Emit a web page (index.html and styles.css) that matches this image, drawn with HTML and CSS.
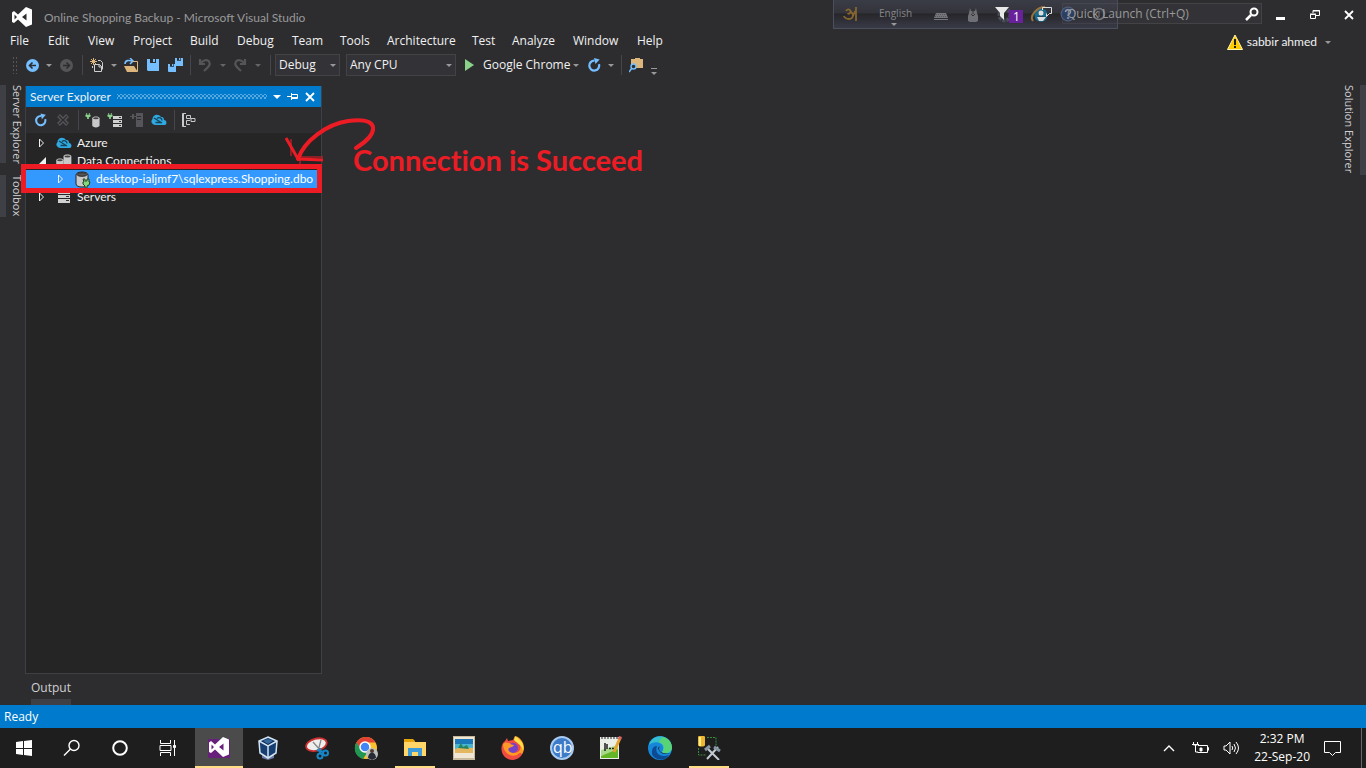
FILE: index.html
```
<!DOCTYPE html>
<html lang="en">
<head>
<meta charset="utf-8">
<meta name="viewport" content="width=device-width, initial-scale=1">
<title>Online Shopping Backup - Microsoft Visual Studio</title>
<link rel="stylesheet" href="styles.css">
</head>
<body>
<svg class="defs" aria-hidden="true">
  <symbol id="vs" viewBox="0 0 22 22"><path fill-rule="evenodd" d="M15 1l6 2.400v15.200L15 21l-8-7.500L3 17l-2-1V6.500L3 5l4 3.500zM15.500 7.500L11 11l4.500 3.500zM3.500 8.500v5L6 11z"/></symbol>
  <symbol id="refresh" viewBox="0 0 16 16"><path d="M12.800 6.500A5.300 5.300 0 1 1 8 2.800" fill="none" stroke="currentColor" stroke-width="2.400"/><path d="M7.500 0l6 1.500-4.500 5z" fill="currentColor"/></symbol>
  <symbol id="cloud" viewBox="0 0 16 14"><path fill="#2fa9e0" d="M4 12a3.500 3.500 0 0 1-2.500-6C1.500 2 7 0 10 4c3 0 3 2 3 3 3 0 3.500 5 0 5z"/><path d="M3 5l8 5M6 5.500c2-2 5-.5 5 2M4.500 9.500h6" fill="none" stroke="#17445c" stroke-width="1.300"/></symbol>
  <symbol id="plug" viewBox="0 0 6 7"><path fill="#8ad18a" d="M1 0h1v2h2V0h1v2h1v2L4 5v2H2V5L0 4V2h1z"/></symbol>
  <symbol id="db" viewBox="0 0 16 16"><path fill="#c8c8c8" d="M4 4c0-3 9-3 9 0v9c0 3-9 3-9 0z"/><ellipse cx="8.500" cy="4" rx="3.500" ry="1.200" fill="#444"/></symbol>
  <symbol id="server" viewBox="0 0 12 12"><path fill="#d0d0d0" d="M0 0h12v3H0zM0 4h12v3H0zM0 8h12v4H0z"/><path fill="#333" d="M8 1h3v1H8zM8 5h3v1H8zM8 9h3v1H8z"/></symbol>
  <symbol id="floppy" viewBox="0 0 12 12"><path fill="#75beff" d="M0 0h3v4h6V0h3v12H1l-1-1z"/><path fill="#75beff" d="M6 0h2v3H6z"/></symbol>
  <symbol id="undo" viewBox="0 0 14 14"><path d="M2 1v5h5M2.500 5.500C5 2 9 1 11 3.500c2 3 0 5-5 9.500" fill="none" stroke="#555558" stroke-width="2.200"/></symbol>
</svg>

<header class="top">
  <div class="titlebar">
    <svg class="logo" viewBox="0 0 22 22"><use href="#vs"/></svg>
    <h1 class="title">Online Shopping Backup - Microsoft Visual Studio</h1>
    <button class="plain notify" aria-label="Notifications">
      <svg width="28" height="18" viewBox="0 0 28 18"><path fill="#e8e8e8" d="M0 1h14L9 7v7l-4-4V7z"/><path fill="#68219a" d="M14 4h14v13H14z"/><text x="18" y="15" class="badge-text">1</text></svg>
    </button>
    <button class="plain feedback" aria-label="Send feedback">
      <svg width="24" height="18" viewBox="0 0 24 18"><path fill="none" stroke="#ddd" d="M12.500 4V1.500h9v6h-2l-3 3v-3"/><circle cx="11" cy="7" r="2.500" fill="#ddd"/><path fill="#ddd" d="M7 11h9l-3 4H9z"/></svg>
    </button>
    <label class="quick"><input type="text" placeholder="Quick Launch (Ctrl+Q)" aria-label="Quick Launch">
      <svg width="14" height="14" viewBox="0 0 14 14"><circle cx="9" cy="5" r="3.500" fill="none" stroke="#fff" stroke-width="2"/><path d="M6 8l-5 5" stroke="#fff" stroke-width="2.500"/></svg>
    </label>
    <div class="winbtns">
      <button class="plain" aria-label="Minimize"><svg width="12" height="12"><path fill="#fff" d="M1 8h9v3H1z"/></svg></button>
      <button class="plain" aria-label="Restore"><svg width="12" height="12" fill="none" stroke="#fff"><path d="M4 4V1.500h6.500v5H7M1.500 5.500h5v4h-5zM1 5h6M4 2h7"/></svg></button>
      <button class="plain" aria-label="Close"><svg width="12" height="12"><path d="M2 2l8 8M10 2l-8 8" stroke="#fff" stroke-width="1.800"/></svg></button>
    </div>
    <div class="ime">
      <svg width="18" height="18" viewBox="0 0 18 18" fill="none" stroke="#86652f" stroke-width="1.800"><path d="M4 6c2-3 6-1 4 2-1 1-2 1-2 0M8 7c4 0 4 7-1 7-3 0-5-2-5-3M10 12c2-1 2-6 4-6M14 2v14"/></svg>
      <span class="lang">English<i class="caret"></i></span>
      <svg width="16" height="18" viewBox="0 0 16 18"><path fill="#75767b" d="M3 8h10l2 5H1zM1 14h14v1H1z"/><path stroke="#55565b" stroke-dasharray="1 1" d="M3 9.500h10M2 11.500h12"/></svg>
      <svg width="12" height="18" viewBox="0 0 12 18"><path fill="#6f7075" d="M3 3l1 3h4l1-3 1 5 1 3v5l-2 1H3l-2-1v-5l1-3z"/><path stroke="#333" fill="none" d="M6 4v5M4 9l2 2 2-2"/></svg>
      <svg width="18" height="18" viewBox="0 0 18 18"><circle cx="9" cy="10" r="5.500" fill="none" stroke="#494d57" stroke-width="4" stroke-dasharray="3 1"/></svg>
      <svg width="22" height="18" viewBox="0 0 22 18" fill="none"><path d="M16 12c-3 5-10 4-10-2s9-7 10 0H6" stroke="#176c8d" stroke-width="3"/><path d="M3 16C-1 11 7 2 15 2" stroke="#98723b" stroke-width="2"/></svg>
      <svg width="16" height="16" viewBox="0 0 16 16"><circle cx="8" cy="8" r="7" fill="#2d4778" fill-opacity=".7" stroke="#59657d"/><path d="M5.500 6c0-3 5-3 5 0 0 2-2.500 2-2.500 4M8 11v2" stroke="#9299a8" fill="none" stroke-width="1.500"/></svg>
      <svg width="14" height="14" viewBox="0 0 14 14"><circle cx="7" cy="7" r="5.500" fill="none" stroke="#77797d" stroke-width="1.500"/><path d="M7 4v6" stroke="#77797d"/></svg>
    </div>
  </div>

  <div class="menubar">
    <nav class="menu">
      <button class="plain">File</button><button class="plain">Edit</button><button class="plain">View</button><button class="plain">Project</button><button class="plain">Build</button><button class="plain">Debug</button><button class="plain">Team</button><button class="plain">Tools</button><button class="plain">Architecture</button><button class="plain">Test</button><button class="plain">Analyze</button><button class="plain">Window</button><button class="plain">Help</button>
    </nav>
    <button class="plain account">
      <svg width="16" height="16" viewBox="0 0 16 16"><path fill="#ffcc00" stroke="#fff3b0" d="M8 1l7.500 14.500H.500z"/><path fill="#1e1e1e" d="M7 5h2v6H7zM7 12h2v2H7z"/></svg>
      <span>sabbir ahmed</span><i class="caret"></i>
    </button>
  </div>

  <div class="toolbar">
    <i class="grip"></i>
    <button class="plain" aria-label="Back"><svg width="13" height="13" viewBox="0 0 13 13"><circle cx="6.500" cy="6.500" r="6.500" fill="#75beff"/><path d="M10 6.500H4M6.500 3.500l-3 3 3 3" fill="none" stroke="#2d2d30" stroke-width="1.600"/></svg></button>
    <i class="caret"></i>
    <button class="plain" aria-label="Forward"><svg width="13" height="13" viewBox="0 0 13 13"><circle cx="6.500" cy="6.500" r="6.500" fill="#555558"/><path d="M3 6.500h6M6.500 3.500l3 3-3 3" fill="none" stroke="#2d2d30" stroke-width="1.600"/></svg></button>
    <i class="sep"></i>
    <button class="plain" aria-label="New project"><svg width="14" height="14" viewBox="0 0 14 14"><path d="M3.500 0v7M0 3.500h7M1 1l5 5M6 1L1 6" stroke="#dcb67a"/><path d="M8 2.500h2.500l2 2v7M2.500 8v2M4.500 13.500v-7h5l2 2v5zM9 6v3h3" fill="none" stroke="#d0d0d0"/></svg></button>
    <i class="caret"></i>
    <button class="plain" aria-label="Open"><svg width="15" height="15" viewBox="0 0 15 15"><path d="M1 6c0-4 4-4 7-3M6 0l3 3-3 3" fill="none" stroke="#75beff" stroke-width="1.600"/><path d="M9 3.500h4.500v10" fill="none" stroke="#dcb67a"/><path fill="#dcb67a" d="M0 8h10l4 6H3z"/></svg></button>
    <button class="plain" aria-label="Save"><svg width="12" height="12"><use href="#floppy"/></svg></button>
    <button class="plain" aria-label="Save all"><svg width="15" height="15" viewBox="0 0 15 15"><use href="#floppy" x="7" y="0" width="8" height="8"/><use href="#floppy" x="0" y="6" width="8" height="8"/></svg></button>
    <i class="sep"></i>
    <button class="plain" aria-label="Undo"><svg width="14" height="14"><use href="#undo"/></svg></button>
    <i class="caret dim"></i>
    <button class="plain" aria-label="Redo"><svg class="flip" width="14" height="14"><use href="#undo"/></svg></button>
    <i class="caret dim"></i>
    <i class="sep"></i>
    <span class="combo"><select aria-label="Configuration"><option>Debug</option></select></span>
    <span class="combo gap"><select aria-label="Platform"><option>Any CPU</option></select></span>
    <button class="plain" aria-label="Start"><svg width="9" height="12"><path fill="#8ad18a" d="M0 0l9 6-9 6z"/></svg></button>
    <button class="plain start-text">Google Chrome</button>
    <i class="caret"></i>
    <button class="plain blue" aria-label="Refresh"><svg width="15" height="15"><use href="#refresh"/></svg></button>
    <i class="caret"></i>
    <i class="sep"></i>
    <button class="plain" aria-label="Find in files"><svg width="14" height="15" viewBox="0 0 14 15"><path fill="#dcb67a" d="M2 1h4V0h5v1h3v9H2z"/><circle cx="4.500" cy="8.500" r="2.500" fill="#2d2d30" stroke="#75beff" stroke-width="1.400"/><path d="M3 10l-3 4" stroke="#75beff" stroke-width="1.600"/></svg></button>
    <span class="overflow"><i class="caret"></i></span>
  </div>
</header>

<main class="work">
  <div class="side left"><button class="plain tab">Server Explorer</button><button class="plain tab toolbox">Toolbox</button></div>
  <section class="panel">
    <div class="panel-head">
      <h2>Server Explorer</h2><i class="dots"></i>
      <i class="caret white"></i>
      <button class="plain" aria-label="Pin"><svg width="12" height="9" fill="none" stroke="#fff"><path d="M0 4.500h4M4.500 1v7M4 2.500h6.500v4H4M4 5.500h6"/></svg></button>
      <button class="plain" aria-label="Close panel"><svg width="10" height="10"><path d="M1 1l8 8M9 1L1 9" stroke="#fff" stroke-width="1.800"/></svg></button>
    </div>
    <div class="panel-tools">
      <button class="plain blue" aria-label="Refresh"><svg width="14" height="15"><use href="#refresh"/></svg></button>
      <button class="plain" aria-label="Stop"><svg width="12" height="12"><path d="M1.500 1.500l9 9M10.500 1.500l-9 9" stroke="#55555a" stroke-width="4"/><path d="M2 2l8 8M10 2l-8 8" stroke="#2d2d30" stroke-width="1.300"/></svg></button>
      <i class="sep"></i>
      <button class="plain" aria-label="Connect to database"><svg width="16" height="16" viewBox="0 0 16 16"><use href="#plug" x="0" y="1" width="6" height="6"/><use href="#db" x="4" y="3" width="13" height="13"/></svg></button>
      <button class="plain" aria-label="Connect to server"><svg width="16" height="16" viewBox="0 0 16 16"><use href="#plug" x="0" y="1" width="6" height="6"/><path fill="#d0d0d0" d="M6 4h9v3H6zM6 8h9v3H6zM6 12h9v3H6z"/><path fill="#333" d="M12 5h2v1h-2zM12 9h2v1h-2zM12 13h2v1h-2z"/></svg></button>
      <button class="plain" aria-label="Add SharePoint connection"><svg width="16" height="16"><path fill="#55555a" d="M7 1h7v14H7zM3 2h2v2h2v1H5v2H3V5H1V4h2z"/><path d="M8 4.500h4M8 7.500h4" stroke="#2d2d30"/></svg></button>
      <button class="plain" aria-label="Connect to Azure"><svg width="16" height="14"><use href="#cloud"/></svg></button>
      <i class="sep"></i>
      <button class="plain" aria-label="Group by"><svg width="16" height="16" fill="none" stroke="#c8c8c8"><path d="M5 1.500H1.500v13H5M2.500 1v14M5.500 3.500h4v3h-4zM10 6.500h4v3h-4zM9 12.500H5.500v-4H9"/></svg></button>
    </div>
    <ul class="tree">
      <li><svg class="mark" width="8" height="10"><path class="hollow" d="M1.500 1v8l4-4z"/></svg><svg width="16" height="14"><use href="#cloud"/></svg><span>Azure</span></li>
      <li><svg class="mark" width="8" height="10"><path fill="#f1f1f1" d="M8 1v7H1z"/></svg><svg width="16" height="16" viewBox="0 0 16 16"><use href="#db" x="4" y="0" width="14" height="14"/><use href="#db" x="-3" y="4" width="13" height="13"/></svg><span>Data Connections</span></li>
      <li class="selected"><svg class="mark" width="8" height="10"><path class="hollow" d="M1.500 1v8l4-4z"/></svg><svg width="16" height="17" viewBox="0 0 16 17"><path fill="#c8c8c8" stroke="#252526" d="M1 4c0-4 12-4 12 0v9c0 4-12 4-12 0z"/><ellipse cx="7" cy="3.500" rx="5" ry="1.800" fill="#555" stroke="#252526"/><path fill="#86d77b" stroke="#234620" d="M8 8h2v2h2V8h2v3h1l-1 3-2 1v2h-2v-2l-2-2v-2h1z"/></svg><span>desktop-ialjmf7\sqlexpress.Shopping.dbo</span></li>
      <li><svg class="mark" width="8" height="10"><path class="hollow" d="M1.500 1v8l4-4z"/></svg><svg width="16" height="12"><use href="#server"/></svg><span>Servers</span></li>
    </ul>
  </section>
  <div class="editor"></div>
  <div class="side right"><button class="plain tab">Solution Explorer</button></div>
  <i class="frame"></i>
  <svg class="arrow" width="92" height="52" viewBox="285 115 92 52" fill="none" stroke="#ed1c24"><path stroke-width="4" stroke-linecap="round" d="M356 148c10-6 18-14 17-21-2-8-17-7-25-6-21 3-44 20-50 38"/><path stroke-width="3" d="M286 138l12 21M298 159l25 1"/><path d="M291 139v17M296 157h27M300 159v7"/></svg>
  <p class="note">Connection is Succeed</p>
</main>

<div class="output"><button class="plain">Output</button></div>
<div class="status">Ready</div>

<footer class="taskbar">
  <div class="system">
    <button class="plain" aria-label="Start menu"><svg width="16" height="16"><path fill="#fff" d="M0 2l7-1v7H0zM8 1l8-1v8H8zM0 9h7v6l-7-1zM8 9h8v7l-8-1z"/></svg></button>
    <button class="plain" aria-label="Search"><svg width="18" height="18" fill="none" stroke="#fff" stroke-width="1.400"><circle cx="11" cy="6.500" r="5"/><path d="M7.500 10L1 16.500"/></svg></button>
    <button class="plain" aria-label="Cortana"><svg width="18" height="18"><circle cx="9" cy="9" r="6.800" fill="none" stroke="#fff" stroke-width="2"/></svg></button>
    <button class="plain" aria-label="Task view"><svg width="18" height="18" fill="none" stroke="#fff"><path d="M1.500 1v3.500h10V1M1.500 17v-3.500h10V17M1 6.500h11v5H1zM15.500 1v16"/><path fill="#fff" d="M14.500 6.500h2v2h-2z"/></svg></button>
  </div>
  <div class="apps">
    <button class="plain active" aria-label="Visual Studio"><svg width="22" height="22"><path fill="#68217a" d="M0 3h22v19H0z"/><use href="#vs" fill="#fff"/></svg></button>
    <button class="plain" aria-label="VirtualBox"><svg width="22" height="24" viewBox="0 0 22 24"><path fill="#6878a0" d="M5 18h12v4l-6 2-6-2z"/><path fill="#173e70" stroke="#d4e4f2" stroke-width="1.500" d="M11 1l9 4-1 12-8 5-8-5L2 5z"/><path fill="#0a2450" stroke="#d4e4f2" stroke-width="1.500" d="M2 5l9 5 9-5M11 10v12"/><path fill="#35689c" d="M11 3l5 2-5 3-5-3z"/></svg></button>
    <button class="plain" aria-label="Snipping Tool"><svg width="24" height="24" viewBox="0 0 24 24"><ellipse cx="11.500" cy="8.500" rx="10.500" ry="6" transform="rotate(-15 12 9)" fill="#eee" stroke="#cf3030" stroke-width="1.800"/><path d="M8 6l8 9M16 4l-3 11" stroke="#888" stroke-width="1.300"/><g fill="none" stroke="#1688c9" stroke-width="2"><circle cx="15" cy="20" r="2.500"/><circle cx="20.500" cy="17" r="2.500"/><path d="M12 14l6 2M15 12v6"/></g></svg></button>
    <button class="plain" aria-label="Google Chrome"><svg width="24" height="24" viewBox="0 0 24 24"><circle cx="12" cy="12" r="11" fill="#fbc02d"/><path fill="#e34133" d="M2.500 6.500a11 11 0 0 1 19 0H12L7 15z"/><path fill="#219653" d="M2.500 6.500L8 15l5 2-4 6A11 11 0 0 1 2.500 6.500z"/><circle cx="11" cy="11" r="5" fill="#4285f4" stroke="#fff" stroke-width="1.500"/><circle cx="18" cy="18" r="6" fill="#b9c0bb"/><circle cx="18" cy="15" r="2" fill="#50382f"/><path fill="#282b35" d="M14 22c0-7 8-7 8 0l-4 2z"/></svg></button>
    <button class="plain running" aria-label="File Explorer"><svg width="22" height="20"><path fill="#e5a50a" d="M0 1h9l2 2v3H0z"/><path fill="#ffd667" d="M0 4h22v14H0z"/><path fill="#3d9bdc" d="M4 18v-8h14v8h-4v-4H8v4z"/></svg></button>
    <button class="plain" aria-label="Photos"><svg width="22" height="24"><path fill="#c9b99c" d="M0 0h22v24H0z"/><path fill="#efe6d3" d="M1 1h20v21H1z"/><path fill="#1b78b9" d="M2 3h18v7H2z"/><path fill="#45b5d2" d="M2 8h18v6H2z"/><path fill="#e3b760" d="M2 13l6-2 12 1v5H2z"/><path fill="#28855b" d="M5 12l3-5 2 4 4-2 2 4z"/></svg></button>
    <button class="plain" aria-label="Firefox"><svg width="24" height="24" viewBox="0 0 24 24"><path fill="#f24b41" d="M4 5l2-3 1 3 5-1 2-4 5 6c6 7 3 17-7 18C2 24-2 14 2 7z"/><path fill="#ff9b23" d="M2 8c4-3 6 0 10 0 4 0 5 8-1 8 8 3 11-5 6-11l-2-5c9 4 10 15 5 19 2-4-2-2-4 0-8 3-14-4-14-11z"/><path fill="#ffe14a" d="M13 4l1-4c6 4 10 9 8 15-1-6-5-7-9-11z"/><circle cx="12" cy="12" r="5" fill="#7542c8"/><path fill="#ff9828" d="M3 7c5-1 6 2 10 2-1 3-5 1-6 5z"/></svg></button>
    <button class="plain" aria-label="qBittorrent"><svg width="24" height="24"><circle cx="12" cy="12" r="11" fill="#3d7bc8" stroke="#a9cbf0" stroke-width="2"/><text x="3" y="17" class="qb">qb</text></svg></button>
    <button class="plain" aria-label="Notepad++"><svg width="24" height="24"><path fill="#e9eee6" d="M1 1h19v22H1z"/><path fill="#62b527" d="M2 20l17-10v12H2z"/><path fill="#a8d889" d="M2 14l17-5v4L2 20z"/><path stroke="#888" stroke-dasharray="2 1" stroke-width="2" d="M2 2h18"/><path stroke="#222" stroke-width="1.500" fill="none" d="M6 7v8M8 8v5M10 12.500h2M13 12.500h2"/><path stroke="#e8a32e" stroke-width="3" d="M21 2l-6 14"/><path fill="#d86464" d="M20 0l3 1-1 3-3-1z"/></svg></button>
    <button class="plain" aria-label="Microsoft Edge"><svg width="24" height="24" viewBox="0 0 24 24"><circle cx="12" cy="12" r="12" fill="#1686d9"/><path fill="#35bfce" d="M1 9C4-3 22-3 24 11c0 7-7 8-10 5 5-9-7-13-13-7z"/><path fill="#58d477" d="M14 1c7 1 10 6 10 11-1 5-7 6-10 4 3-3 3-8-3-10z"/><path fill="#0c4a94" d="M9 10c-3 8 4 12 12 9-5 8-18 4-17-3 0-4 2-6 5-6z"/><path fill="#202020" d="M12 10c-3 4 1 9 10 7-6 2-10 1-12-5z"/></svg></button>
    <button class="plain running" aria-label="SQL Server"><svg width="24" height="24"><path fill="#eeb52e" d="M1 1c0-2 7-2 7 0v8c0 2-7 2-7 0z"/><path fill="#ffed98" d="M2 1h2v9H2z"/><path fill="none" stroke="#368c3c" stroke-dasharray="2 1" d="M10 1.500h9v8M1.500 12v7H9"/><path stroke="#c4ccd3" stroke-width="2" d="M10 23L21 11M10 12l12 12"/><path stroke="#8796a3" stroke-width="3" d="M8 14l5-4M17 11l6 4"/></svg></button>
  </div>
  <div class="tray">
    <button class="plain" aria-label="Show hidden icons"><svg width="12" height="8"><path d="M1 7l5-5 5 5" fill="none" stroke="#fff" stroke-width="1.400"/></svg></button>
    <button class="plain" aria-label="Battery"><svg width="17" height="14" fill="none" stroke="#fff"><path d="M6 4.500h9.500v7H5.500M15 6.500h1.500v3M1.500 1v3h4V1M3.500 4v7H6M0 3.500h7"/><path fill="#fff" d="M8 7h2v3H8z"/></svg></button>
    <button class="plain" aria-label="Volume"><svg width="17" height="14" fill="none" stroke="#fff"><path d="M1 5h2l4-4v12L3 9H1zM9 5q1.500 2 0 4M11 3q3 4 0 8M13 1q5 6 0 12"/></svg></button>
    <div class="clock"><time>2:32 PM</time><time>22-Sep-20</time></div>
    <button class="plain" aria-label="Action center"><svg width="17" height="17" fill="none" stroke="#fff"><path d="M.500 1.500h16v11h-5l-3 3-3-3h-5z"/></svg></button>
    <i class="desktop"></i>
  </div>
</footer>
</body>
</html>
```
FILE: styles.css
```
* { box-sizing: border-box; }
body {
  margin: 0;
  min-height: 100vh;
  display: flex;
  flex-direction: column;
  background: #2d2d30;
  color: #f1f1f1;
  font: 12px/16px "Open Sans", "Noto Sans", sans-serif;
  overflow: hidden;
}
.defs { position: absolute; width: 0; height: 0; }
svg { display: block; flex: none; }
.plain {
  display: flex;
  align-items: center;
  justify-content: center;
  padding: 0;
  border: 0;
  background: none;
  color: inherit;
  font: inherit;
  white-space: nowrap;
}
.blue { color: #75beff; }
.caret {
  display: block;
  width: 0;
  border: 3px solid transparent;
  border-top-color: #999;
  border-bottom: 0;
}
.dim { border-top-color: #656568; }
.white { border-width: 4px; border-bottom: 0; border-top-color: #fff; }
.sep { width: 1px; height: 20px; background: #46464a; }
.flip { transform: scaleX(-1); }

/* Title bar */
.titlebar { position: relative; display: flex; align-items: center; height: 30px; padding: 0 11px 0 11px; }
.logo { width: 22px; height: 22px; fill: #fff; margin-top: 4px; }
.title { flex: 1; margin: 6px 0 0 11px; font: 12px/16px Lato, "Open Sans", sans-serif; color: #999; }
.notify, .feedback { position: relative; z-index: 1; }
.notify { margin-right: 7px; }
.feedback { margin-right: 8px; }
.badge-text { font: 12px "Open Sans", sans-serif; fill: #fff; }
.quick { display: flex; align-items: center; width: 200px; height: 21px; margin-bottom: 3px; padding: 0 2px 0 4px; border: 1px solid #434346; background: #333337; }
.quick input { position: relative; z-index: 1; flex: 1; min-width: 0; padding: 0; border: 0; background: none; color: #999; font: inherit; }
.quick input::placeholder { color: #999; opacity: 1; }
.winbtns { display: flex; gap: 22px; margin-left: 13px; }
.ime {
  position: absolute;
  top: 0;
  right: 248px;
  display: flex;
  align-items: center;
  width: 285px;
  height: 29px;
  padding-left: 8px;
  border: 1px solid #4b4e5c;
  border-top: 0;
  background: linear-gradient(rgba(74, 78, 98, .45), rgba(60, 62, 74, .4) 45%, rgba(28, 28, 32, .4) 50%, rgba(70, 74, 98, .45));
  font-size: 10px;
  color: #85868a;
}
.lang { position: relative; width: 36px; margin: 0 18px 2px 19px; }
.lang .caret { position: absolute; left: 12px; top: 18px; }
.ime svg:nth-of-type(2) { margin-right: 18px; }
.ime svg:nth-of-type(3) { margin-right: 17px; }
.ime svg:nth-of-type(4) { margin-right: 16px; }
.ime svg:nth-of-type(5) { margin-right: 8px; }
.ime svg:nth-of-type(6) { margin-right: 16px; }

/* Menu */
.menubar { display: flex; justify-content: space-between; height: 22px; padding: 0 35px 0 10px; }
.menu { display: grid; grid-template-columns: 38px 40px 45px 57px 47px 55px 48px 47px 85px 40px 61px 64px 30px; justify-items: start; align-items: center; }
.account { gap: 4px; padding-top: 2px; font-family: Lato, "Open Sans", sans-serif; }
.account .caret { margin-left: 4px; }

/* Toolbar */
.toolbar {
  display: grid;
  grid-template-columns: 12px 24px 10px 24px 8px 22px 12px 22px 22px 22px 8px 22px 14px 20px 16px 8px 66px 116px 27px 87px 12px 24px 10px 10px 20px 16px;
  align-items: center;
  justify-items: center;
  height: 26px;
  padding-left: 8px;
}
.grip { width: 5px; height: 18px; background: radial-gradient(circle, #56565a 1px, transparent 1px) 0 0 / 3px 4px; }
.combo { position: relative; width: 65px; justify-self: end; }
.gap { width: 110px; }
.combo select { appearance: none; display: block; width: 100%; height: 22px; padding: 0 3px; border: 1px solid #434346; border-radius: 0; background: #333337; color: #f1f1f1; font: inherit; }
.combo::after { content: ""; position: absolute; right: 4px; top: 10px; border: 3px solid transparent; border-top-color: #999; border-bottom: 0; }
.start-text { justify-self: start; }
.overflow { padding-top: 3px; border-top: 1px solid #999; margin-top: 12px; }

/* Work area */
.work { position: relative; flex: 1; display: flex; padding-top: 7px; }
.side { display: flex; flex-direction: column; gap: 12px; width: 25px; color: #d0d0d0; font-size: 11px; }
.tab { writing-mode: vertical-rl; justify-content: flex-start; height: 78px; }
.left .tab { border-left: 6px solid #3f3f46; width: 25px; padding-left: 2px; }
.left .toolbox { height: 42px; }
.right .tab { border-right: 6px solid #3f3f46; width: 25px; height: 90px; padding-right: 4px; }
.editor { flex: 1; }
.panel { display: flex; flex-direction: column; width: 297px; margin-top: 1px; border: 1px solid #3f3f46; border-top: 0; background: #252526; font-family: Lato, "Open Sans", sans-serif; }
.panel-head { display: flex; align-items: center; gap: 6px; height: 21px; padding: 0 6px 0 4px; background: #007acc; }
.panel-head h2 { margin: 0; font-size: 12px; font-weight: 400; }
.dots {
  flex: 1;
  height: 5px;
  background:
    radial-gradient(circle, #59a8de 1px, transparent 1px) 0 0 / 4px 4px,
    radial-gradient(circle, #59a8de 1px, transparent 1px) 2px 2px / 4px 4px;
}
.panel-tools { display: grid; grid-template-columns: 22px 22px 8px 22px 22px 22px 22px 8px 22px; align-items: center; justify-items: center; height: 26px; padding-left: 4px; background: #2d2d30; }
.tree { list-style: none; margin: 0; padding: 1px 0; }
.tree li { display: grid; grid-template-columns: 8px 16px auto; column-gap: 6px; align-items: center; height: 18px; padding-left: 12px; white-space: nowrap; }
.tree li svg { margin-left: 4px; }
.tree li .mark { margin-left: 0; }
.hollow { fill: none; stroke: #f1f1f1; }
.tree li span { margin-left: 3px; }
.tree .selected { padding-left: 31px; background: #3399ff; color: #fff; }

/* Annotation over the window */
.frame { position: absolute; left: 21px; top: 86px; width: 301px; height: 29px; border: 5px solid #ed1c24; }
.arrow { position: absolute; left: 285px; top: 37px; }
.note { position: absolute; left: 353px; top: 65px; margin: 0; font: 700 29px/34px Lato, sans-serif; font-variant-ligatures: none; color: #ed1c24; white-space: nowrap; }

/* Bottom */
.output { display: flex; height: 31px; padding: 6px 31px 0; }
.output .plain { align-items: flex-start; border-bottom: 6px solid #3f3f46; color: #d0d0d0; }
.status { height: 23px; padding: 4px; background: #007acc; color: #fff; }
.taskbar { display: flex; height: 40px; background: #1e1e1e; color: #fff; }
.system, .apps, .tray { display: flex; }
.system .plain, .apps .plain { width: 48px; height: 40px; }
.apps { gap: 1px; margin-left: 3px; }
.apps .plain { position: relative; }
.active { background: #4b4b4b; border-bottom: 2px solid #ffdc86; }
.running::after { content: ""; position: absolute; left: 4px; right: 4px; bottom: 0; height: 2px; background: #ffdc86; }
.qb { font: 16px "Open Sans", sans-serif; fill: #fff; }
.tray { margin-left: auto; align-items: center; gap: 14px; }
.tray .plain:first-child { margin-right: 3px; }
.clock { display: flex; flex-direction: column; align-items: center; line-height: 18px; }
.desktop { width: 1px; height: 40px; margin: 0 4px 0 6px; background: #666; }
```
